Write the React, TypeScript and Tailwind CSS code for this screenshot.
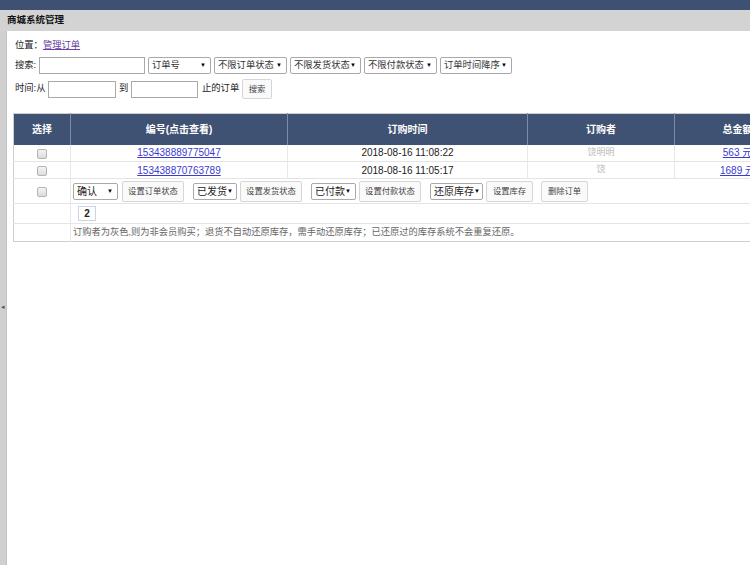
import React from 'react';

const font = "font-['Liberation_Sans','Noto_Sans_CJK_SC',sans-serif]";

function FakeSelect({ label, width, big }: { label: string; width: string; big?: boolean }) {
  return (
    <span
      className={`${width} h-[17px] inline-flex items-center justify-between border border-[#a9a9a9] rounded-[2px] bg-white pl-[3px] pr-[4px] ${big ? 'text-[10px] text-[#222]' : 'text-[9.3px] text-[#333]'}`}
    >
      <span className="whitespace-nowrap">{label}</span>
      <span className="text-[6px] text-black">▼</span>
    </span>
  );
}

function Btn({ label, width, h = 'h-[21px]' }: { label: string; width: string; h?: string }) {
  return (
    <span
      className={`${width} ${h} inline-flex items-center justify-center border border-[#d6d6d6] rounded-[2px] bg-[#fafafa] text-[8.3px] text-[#444] whitespace-nowrap`}
    >
      {label}
    </span>
  );
}

function Check() {
  return (
    <span className="inline-block w-[10px] h-[10px] rounded-[2px] border border-[#b4b4b4] bg-gradient-to-b from-[#f4f4f4] to-[#dcdcdc] align-middle" />
  );
}

const orders = [
  { id: '153438889775047', time: '2018-08-16 11:08:22', buyer: '饶明明', total: '563 元' },
  { id: '153438870763789', time: '2018-08-16 11:05:17', buyer: '饶', total: '1689 元' },
];

export default function App() {
  return (
    <div className={`w-[750px] h-[565px] overflow-hidden bg-white ${font}`}>
      {/* top bar */}
      <div className="h-[10px] bg-[#3e5173]" />
      <div className="h-[21px] bg-[#d3d3d3] flex items-center pl-[7px] text-[9.5px] font-bold text-[#111]">
        商城系统管理
      </div>

      <div className="flex h-[534px]">
        {/* left collapse strip */}
        <div className="w-[7px] shrink-0 bg-[#d0d0d0] border-r border-[#c4c4c4] flex justify-center pt-[272px]">
          <span className="text-[7px] leading-none text-[#555]">◂</span>
        </div>

        <div className="flex-1 min-w-0 overflow-hidden pl-[6px]">
          {/* location */}
          <div className="mt-[8px] h-[14px] pl-[2px] flex items-center text-[9.3px] text-[#222]">
            位置：<span className="text-[#6b3fa3] underline">管理订单</span>
          </div>

          {/* search row */}
          <div className="mt-[4px] h-[17px] pl-[2px] flex items-center text-[9.3px] text-[#222]">
            <span className="w-[24px]">搜索:</span>
            <span className="w-[106px] h-[17px] border border-[#a9a9a9] bg-white" />
            <span className="ml-[3px] flex gap-[3px]">
              <FakeSelect label="订单号" width="w-[63px]" />
              <FakeSelect label="不限订单状态" width="w-[73px]" />
              <FakeSelect label="不限发货状态" width="w-[71px]" />
              <FakeSelect label="不限付款状态" width="w-[73px]" />
              <FakeSelect label="订单时间降序" width="w-[72px]" />
            </span>
          </div>

          {/* time row */}
          <div className="mt-[5px] h-[20px] pl-[2px] flex items-center text-[9.3px] text-[#222]">
            <span className="w-[33px]">时间:从</span>
            <span className="w-[68px] h-[17px] border border-[#a9a9a9] bg-white" />
            <span className="ml-[3px] w-[12px]">到</span>
            <span className="w-[67px] h-[17px] border border-[#a9a9a9] bg-white" />
            <span className="ml-[4px] w-[40px]">止的订单</span>
            <Btn label="搜索" width="w-[30px]" h="h-[20px]" />
          </div>

          {/* orders table */}
          <table className="mt-[14px] w-[787px] border-collapse border border-[#cfcfcf] table-fixed text-[10px]">
            <colgroup>
              <col className="w-[57px]" />
              <col className="w-[217px]" />
              <col className="w-[240px]" />
              <col className="w-[147px]" />
              <col className="w-[126px]" />
            </colgroup>
            <thead>
              <tr className="h-[31px] bg-[#3f5273] text-white text-[10px] font-bold">
                <th className="p-0 border-r border-[#7f8ca3]">选择</th>
                <th className="p-0 border-r border-[#7f8ca3]">编号(点击查看)</th>
                <th className="p-0 border-r border-[#7f8ca3]">订购时间</th>
                <th className="p-0 border-r border-[#7f8ca3]">订购者</th>
                <th className="p-0">总金额</th>
              </tr>
            </thead>
            <tbody>
              {orders.map((o) => (
                <tr key={o.id} className="h-[17px] border-b border-[#e4e4e4]">
                  <td className="p-0 text-center border-r border-[#e8e8e8]">
                    <Check />
                  </td>
                  <td className="p-0 text-center border-r border-[#e8e8e8]">
                    <span className="text-[#3b3bd0] underline">{o.id}</span>
                  </td>
                  <td className="p-0 text-center border-r border-[#e8e8e8] text-[#222]">{o.time}</td>
                  <td className="p-0 text-center border-r border-[#e8e8e8] text-[9px] text-[#bdbdbd]">{o.buyer}</td>
                  <td className="p-0 text-center">
                    <span className="text-[#3b3bd0] underline">{o.total}</span>
                  </td>
                </tr>
              ))}
              <tr className="h-[25px] border-b border-[#e4e4e4]">
                <td className="p-0 text-center border-r border-[#e8e8e8]">
                  <Check />
                </td>
                <td colSpan={4} className="p-0 pl-[2px]">
                  <div className="flex items-center">
                    <FakeSelect label="确认" width="w-[45px]" big />
                    <span className="ml-[4px]"><Btn label="设置订单状态" width="w-[62px]" /></span>
                    <span className="ml-[9px]"><FakeSelect label="已发货" width="w-[44px]" big /></span>
                    <span className="ml-[3px]"><Btn label="设置发货状态" width="w-[62px]" /></span>
                    <span className="ml-[9px]"><FakeSelect label="已付款" width="w-[45px]" big /></span>
                    <span className="ml-[3px]"><Btn label="设置付款状态" width="w-[62px]" /></span>
                    <span className="ml-[9px]"><FakeSelect label="还原库存" width="w-[53px]" big /></span>
                    <span className="ml-[3px]"><Btn label="设置库存" width="w-[47px]" /></span>
                    <span className="ml-[8px]"><Btn label="删除订单" width="w-[47px]" /></span>
                  </div>
                </td>
              </tr>
              <tr className="h-[20px] border-b border-[#e4e4e4]">
                <td className="p-0 border-r border-[#e8e8e8]" />
                <td colSpan={4} className="p-0 pl-[7px]">
                  <span className="inline-flex w-[18px] h-[15px] items-center justify-center border border-[#c9d5e2] text-[10px] font-bold text-[#222]">
                    2
                  </span>
                </td>
              </tr>
              <tr className="h-[18px]">
                <td className="p-0 border-r border-[#e8e8e8]" />
                <td colSpan={4} className="p-0 pl-[2px] text-[9.25px] text-[#666] whitespace-nowrap">
                  订购者为灰色,则为非会员购买；退货不自动还原库存，需手动还原库存；已还原过的库存系统不会重复还原。
                </td>
              </tr>
            </tbody>
          </table>
        </div>
      </div>
    </div>
  );
}
